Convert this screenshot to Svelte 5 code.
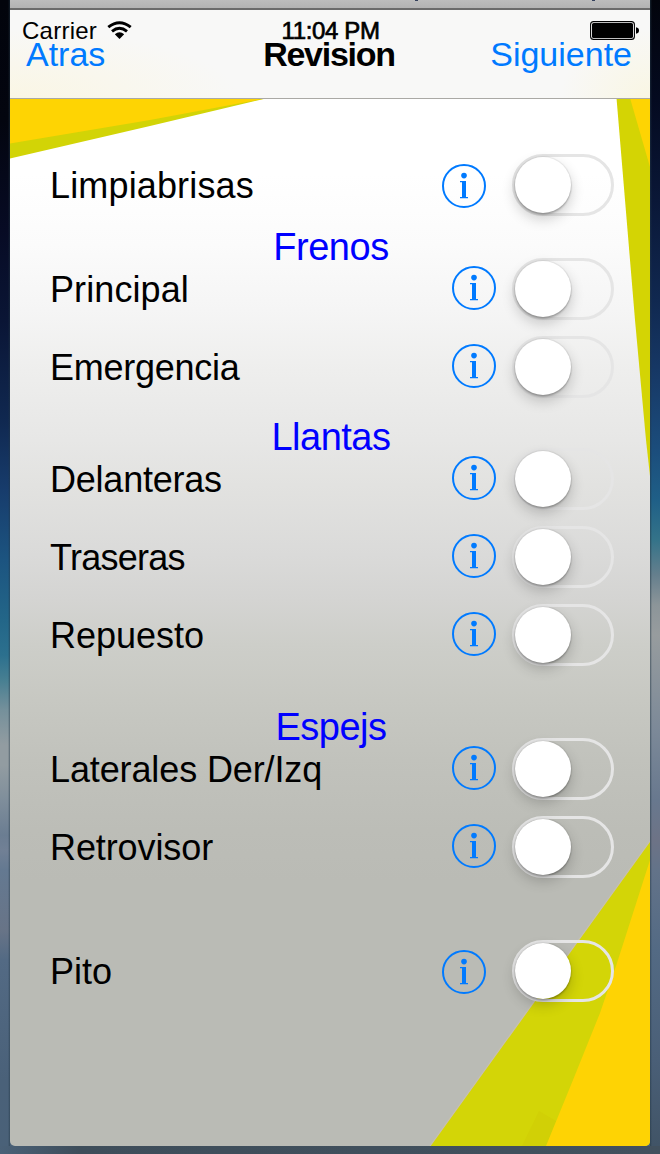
<script>
  const groups = [
    { title: '', offset: 0, inset: 26, shift: 1, rows: [['Limpiabrisas', 0.15]] },
    { title: 'Frenos', offset: 20, inset: 16, shift: -1, rows: [['Principal', 0.1], ['Emergencia', -0.27]] },
    { title: 'Llantas', offset: 28, inset: 16, shift: -1, rows: [['Delanteras', -0.22], ['Traseras', -0.75], ['Repuesto', 0]] },
    { title: 'Espejs', offset: 50, inset: 16, shift: -1, rows: [['Laterales Der/Izq', -0.12], ['Retrovisor', -0.1]] },
    { title: '', offset: 62, inset: 26, shift: 1, rows: [['Pito', 0]] }
  ];
  let on = $state({});
</script>

<div class="desktop">
  <div class="titlebar">
    <svg width="640" height="2" aria-hidden="true">
      <path d="M405 0h3M582 0h3" stroke="#34405c" stroke-width="2" />
    </svg>
  </div>
  <main class="phone">
    <svg class="art" viewBox="10 10 640 1136" aria-hidden="true">
      <path d="M10 98H268L150 126L10 158.5Z" fill="#d2d406" />
      <path d="M10 98H268L150 120L10 143.5Z" fill="#fed403" />
      <path d="M616.5 98H650V476L646 440L635 320L620 140Z" fill="#d4d404" />
      <path d="M630 98H650V167Z" fill="#fed403" />
      <path d="M650 841L430 1146H650Z" fill="#d3d507" />
      <path d="M650 841L430 1146" stroke="#c7bfb4" stroke-width="1.2" />
      <path d="M522 1146L539 1111L556 1121L546 1146Z" fill="#d1d006" />
      <path d="M650 860L617 963L600 1013L573 1080L546 1146H650Z" fill="#fed304" />
    </svg>

    <header>
      <div class="status">
        <div class="carrier">
          <span>Carrier</span>
          <svg width="25" height="19" viewBox="0 0 25 19" aria-hidden="true">
            <g fill="none" stroke="#000" stroke-width="2.9">
              <path d="M1.3 6.2Q12.5 -2.9 23.7 6.2" />
              <path d="M5 10.3Q12.5 4.1 20 10.3" />
            </g>
            <path d="M7.8 13.2Q12.5 9.2 17.2 13.2L12.5 18Z" />
          </svg>
        </div>
        <span class="clock">11:04 PM</span>
        <svg class="battery" width="49" height="19" viewBox="0 0 49 19" aria-hidden="true">
          <rect x=".6" y=".6" width="43.8" height="17.8" rx="3" fill="#fff" stroke="#000" stroke-width="1.1" />
          <rect x="2" y="2" width="41" height="15" rx="1.6" />
          <path d="M46 6.2Q49 6.8 49 9.5T46 12.8Z" />
        </svg>
      </div>
      <nav>
        <button class="link">Atras</button>
        <h1>Revision</h1>
        <button class="link next">Siguiente</button>
      </nav>
    </header>

    <div class="list">
      {#each groups as group}
        <section style:margin-top="{group.offset}px">
          {#if group.title}<h2>{group.title}</h2>{/if}
          <div class="rows">
            {#each group.rows as [row, tracking]}
              <div class="row">
                <span class="label" style:letter-spacing="{tracking}px">{row}</span>
                <button class="info" aria-label="Info {row}" style:margin-right="{group.inset}px" style:margin-top="{group.shift * 2}px">
                  <svg width="44" height="44" viewBox="0 0 44 44">
                    <circle cx="22" cy="22" r="21" fill="none" stroke="#007aff" stroke-width="2" />
                    <circle cx="22" cy="11.6" r="2.8" fill="#007aff" />
                    <path d="M18 17H24V33H26V34.3H18V33H20V18.3H18Z" fill="#007aff" />
                  </svg>
                </button>
                <button
                  class="switch"
                  class:on={on[row]}
                  role="switch"
                  aria-label={row}
                  aria-checked={!!on[row]}
                  onclick={() => (on[row] = !on[row])}
                ><span class="thumb"></span></button>
              </div>
            {/each}
          </div>
        </section>
      {/each}
    </div>
  </main>
</div>

<style>
  .desktop {
    box-sizing: border-box;
    width: 660px;
    height: 1154px;
    padding: 0 10px 8px;
    overflow: hidden;
    font-family: "Liberation Sans", Arial, sans-serif;
    background:
      linear-gradient(90deg, #4a6178 0, #3e4d5a 80px, #42515e 100%) 0 1146px / 100% 8px no-repeat,
      linear-gradient(90deg, transparent 8px, #23374588 10px) 0 0 / 10px 100% no-repeat,
      linear-gradient(270deg, transparent 8px, #23374599 10px) 100% 0 / 10px 100% no-repeat,
      linear-gradient(#02040c 0, #040a20 100px, #0a1737 200px, #102850 300px, #173a68 380px, #1b4d7c 450px, #1f5f87 500px, #347389 540px, #657f8d 575px, #8c9599 605px, #979c9e 635px, #8a939b 680px, #7c8998 730px, #68788e 800px, #6d7386 840px, #637389 870px, #536a84 950px, #4a5f77 1060px, #405365 1154px) 100% 0 / 10px 100% no-repeat,
      linear-gradient(#02040c 0, #03050f 120px, #070b24 230px, #0a1535 320px, #102850 420px, #173c6c 490px, #1c5480 560px, #236688 620px, #2c708e 655px, #477f92 680px, #75909b 710px, #929ca1 745px, #929ca1 765px, #7f8e9b 800px, #6b7d92 835px, #718095 850px, #647991 870px, #687487 930px, #536a84 960px, #4a6179 1080px, #4a6178 1154px);
  }
  .titlebar {
    box-sizing: border-box;
    height: 10px;
    background: linear-gradient(#bdbdbd, #b3b3b3);
    border-bottom: 2px solid #6b6b6b;
  }
  .titlebar svg { display: block; }
  .phone {
    position: relative;
    height: 1136px;
    border-radius: 0 0 5px 5px;
    overflow: hidden;
    background: linear-gradient(#fff 0, #fff 165px, #fbfbfb 235px, #f5f5f5 300px, #eeeeed 360px, #e7e7e6 430px, #e2e2e0 475px, #dadad9 545px, #d4d4d2 590px, #cdcec9 635px, #c7c8c2 690px, #c1c2bc 750px, #bcbdb7 820px, #babbb5 870px, #babbb5 1136px);
  }
  .art {
    position: absolute;
    inset: 0;
    width: 640px;
    height: 1136px;
  }
  header {
    position: relative;
    box-sizing: border-box;
    height: 89px;
    padding-top: 6px;
    border-bottom: 1px solid #aaa9a5;
    background:
      radial-gradient(ellipse 230px 70px at 0 100%, #faf6e4, transparent),
      radial-gradient(ellipse 90px 70px at 100% 100%, #f9f6e3, transparent),
      #f8f8f7;
  }
  .status {
    display: grid;
    grid-template-columns: 1fr auto 1fr;
    height: 28px;
    padding: 0 11px 0 12px;
    font-size: 24px;
    line-height: 30px;
  }
  .carrier { display: flex; gap: 10px; letter-spacing: .25px; }
  .carrier svg { margin-top: 5px; }
  .clock { letter-spacing: -.35px; -webkit-text-stroke: .7px #000; }
  .battery { justify-self: end; margin-top: 5px; }
  nav {
    display: grid;
    grid-template-columns: 1fr auto 1fr;
    align-items: center;
    height: 40px;
    margin-top: -10px;
    padding: 0 18px 0 16px;
  }
  button {
    padding: 0;
    border: 0;
    background: none;
    font: inherit;
    display: block;
  }
  .link { justify-self: start; color: #007aff; font-size: 34px; line-height: 40px; }
  .next { justify-self: end; }
  h1 { margin: 0; font-size: 34px; line-height: 40px; letter-spacing: -1.25px; }
  .list { position: relative; padding: 55px 36px 0 40px; }
  h2 {
    margin: 0 2px 0 0;
    height: 22px;
    text-align: center;
    color: #00f;
    font-size: 38px;
    font-weight: 400;
    line-height: 22px;
    letter-spacing: -.5px;
  }
  .rows { display: flex; flex-direction: column; gap: 16px; }
  .row { display: flex; align-items: center; height: 62px; }
  .label { flex: 1; padding-top: 2px; font-size: 36px; line-height: 42px; }
  .info { width: 44px; height: 44px; }
  .info svg { display: block; }
  .switch {
    box-sizing: border-box;
    width: 102px;
    height: 62px;
    border: 3px solid #e5e5e5;
    border-radius: 31px;
  }
  .thumb {
    display: block;
    width: 56px;
    height: 56px;
    border-radius: 50%;
    background: #fff;
    box-shadow: 0 0 1px 1px #0001, 0 2px 2px #0003, 0 6px 14px #0003;
    transition: transform .2s;
  }
  .on { background: #4cd964; border-color: #4cd964; }
  .on .thumb { transform: translateX(40px); }
</style>
